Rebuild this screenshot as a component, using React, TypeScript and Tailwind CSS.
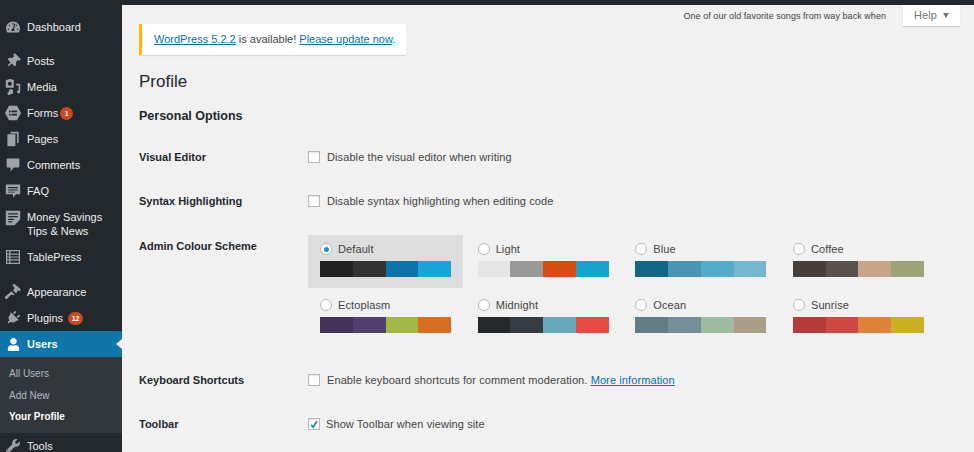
import React from "react";
import { FaThumbtack, FaWrench, FaUser, FaPlug, FaTachometerAlt } from "react-icons/fa";

const ic = "w-[16px] h-[16px]";
const HexIcon = () => (
  <svg viewBox="0 0 20 20" className={ic} fill="currentColor">
    <path fillRule="evenodd" d="M5 1h10l5 9-5 9H5L0 10zM5 7v2h2V7zm3 0v2h7V7zM5 11v2h2v-2zm3 0v2h7v-2z" />
  </svg>
);
const MediaIcon = () => (
  <svg viewBox="0 0 20 20" className={ic} fill="currentColor">
    <path fillRule="evenodd" d="M1 1h3l1-1h3l1 1h2v10H1zm5 2.500a2.500 2.500 0 100 5 2.500 2.500 0 000-5z" />
    <path d="M14 6h5v10a2 2 0 11-2-2V8h-3zM5 13h5v4a2 2 0 11-2-2h-1v3a2 2 0 11-2-2z" />
  </svg>
);
const PagesIcon = () => (
  <svg viewBox="0 0 20 20" className={ic} fill="currentColor">
    <path d="M7 1h10v14h-2V3H7z" />
    <path d="M3 4h10v15H3z" />
  </svg>
);
const CommentIcon = () => (
  <svg viewBox="0 0 20 20" className={ic} fill="currentColor">
    <path d="M3 2h14a1 1 0 011 1v9a1 1 0 01-1 1h-6l-4 5v-5H3a1 1 0 01-1-1V3a1 1 0 011-1z" />
  </svg>
);
const FaqIcon = () => (
  <svg viewBox="0 0 20 20" className={ic} fill="currentColor">
    <path fillRule="evenodd" d="M1 2h18v12h-5l-4 4v-4H1zm3 3v1.500h12V5zm0 3v1.500h12V8zm0 3v1h8v-1z" />
  </svg>
);
const NoteIcon = () => (
  <svg viewBox="0 0 20 20" className={ic} fill="currentColor">
    <path fillRule="evenodd" d="M1 1h18v11l-7 7H1zm3 3v1.500h12V4zm0 3.500V9h12V7.500zM4 11v1.500h7V11zm0 3v1.500h5V14z" />
  </svg>
);
const TableIcon = () => (
  <svg viewBox="0 0 20 20" className={ic} fill="none" stroke="currentColor" strokeWidth="1.500">
    <path d="M2 2h16v16H2zM2 6.500h16M2 10h16M2 13.500h16M6 2v16" />
  </svg>
);
const BrushIcon = () => (
  <svg viewBox="0 0 20 20" className={ic} fill="currentColor">
    <path d="M9 1l3-1 8 7-2 2-2-1-2 4-4-4 2-3zM8 9l4 4-1 1-3-1-6 6-2-1v-2l6-5z" />
  </svg>
);

const fa = "w-[14px] h-[14px]";
function Item({ icon, label, badge, cls = "h-[26px]", twoLine }: { icon: React.ReactNode; label: React.ReactNode; badge?: string; cls?: string; twoLine?: boolean }) {
  return (
    <div className={`flex ${twoLine ? "items-start pt-[6px]" : "items-center"} pl-[2px] text-[#eeeeee] ${cls}`}>
      <span className="w-[22px] flex justify-center text-[#9ea3a8] shrink-0 mr-[3px]">{icon}</span>
      <span className="leading-[14px] tracking-normal">{label}</span>
      {badge && (
        <span className={`${badge.length > 1 ? "ml-[5px] w-[15px]" : "ml-[2px] w-[13px]"} h-[13px] rounded-full bg-[#ca4a1f] text-white text-[7px] leading-[13px] text-center font-bold tracking-normal`}>{badge}</span>
      )}
    </div>
  );
}

function Row({ label, children, cls }: { label: string; children: React.ReactNode; cls: string }) {
  return (
    <div className={`flex items-center ${cls}`}>
      <div className="w-[169px] font-bold tracking-normal text-[#23282d] shrink-0 pt-[1px]">{label}</div>
      {children}
    </div>
  );
}

const Box = ({ checked }: { checked?: boolean }) => (
  <span className="w-[12px] h-[12px] bg-white border border-[#b4b9be] shadow-[inset_0_1px_2px_rgba(0,0,0,0.1)] flex items-center justify-center shrink-0">
    {checked && (
      <svg viewBox="0 0 12 12" className="w-[11px] h-[11px]" fill="none" stroke="#1e8cbe" strokeWidth="2.200"><path d="M2.500 6.500l2.500 2.500 4.500-7" /></svg>
    )}
  </span>
);

const schemes: { name: string; colors: string[]; active?: boolean }[] = [
  { name: "Default", colors: ["#222222", "#333333", "#0e73aa", "#19a3d6"], active: true },
  { name: "Light", colors: ["#e5e5e5", "#999999", "#d64e16", "#19a3cc"] },
  { name: "Blue", colors: ["#106788", "#4796b3", "#52accc", "#74b6ce"] },
  { name: "Coffee", colors: ["#46403c", "#59524c", "#c7a589", "#9ea476"] },
  { name: "Ectoplasm", colors: ["#413256", "#523f6d", "#a3b745", "#d46f25"] },
  { name: "Midnight", colors: ["#25282b", "#363b3f", "#69a8bb", "#e14d43"] },
  { name: "Ocean", colors: ["#627c83", "#738e96", "#9ebaa0", "#aa9d88"] },
  { name: "Sunrise", colors: ["#b43c38", "#cf4944", "#dd823b", "#ccaf25"] },
];

export default function App() {
  return (
    <div className="w-[974px] h-[452px] overflow-hidden flex flex-col bg-[#f1f1f1] text-[11px] tracking-[0.1px] text-[#444]" style={{ fontFamily: '"Liberation Sans", Arial, sans-serif' }}>
      <div className="h-[5px] bg-[#23282d] shrink-0" />
      <div className="flex flex-1 min-h-0">
        <aside className="w-[122px] shrink-0 bg-[#23282d] pt-[9px] overflow-hidden">
          <Item icon={<FaTachometerAlt className={fa} />} label="Dashboard" cls="h-[26px] mb-[8px]" />
          <Item icon={<FaThumbtack className={`${fa} rotate-45`} />} label="Posts" />
          <Item icon={<MediaIcon />} label="Media" />
          <Item icon={<HexIcon />} label="Forms" badge="1" />
          <Item icon={<PagesIcon />} label="Pages" />
          <Item icon={<CommentIcon />} label="Comments" />
          <Item icon={<FaqIcon />} label="FAQ" />
          <Item icon={<NoteIcon />} label={<>Money Savings<br />Tips &amp; News</>} cls="h-[40px]" twoLine />
          <Item icon={<TableIcon />} label="TablePress" cls="h-[26px] mb-[9px]" />
          <Item icon={<BrushIcon />} label="Appearance" />
          <Item icon={<FaPlug className={`${fa} rotate-45`} />} label="Plugins" badge="12" />
          <div className="relative flex items-center h-[26px] pl-[2px] bg-[#0e76a8] text-white font-bold tracking-normal">
            <span className="w-[22px] flex justify-center mr-[3px]"><FaUser className="w-[13px] h-[13px]" /></span>
            <span className="pt-[1px]">Users</span>
            <span className="absolute right-0 top-[8px] border-y-[5px] border-y-transparent border-r-[6px] border-r-[#f1f1f1]" />
          </div>
          <div className="h-[76px] bg-[#32373c] pl-[9px] pt-[6px] text-[10px] tracking-normal text-[#b4b9be]">
            <div className="h-[22px] leading-[22px]">All Users</div>
            <div className="h-[21px] leading-[21px]">Add New</div>
            <div className="h-[21px] leading-[21px] text-white font-bold">Your Profile</div>
          </div>
          <Item icon={<FaWrench className={fa} />} label="Tools" />
        </aside>
        <main className="flex-1 min-w-0 pl-[17px] pr-[14px]">
          <div className="flex justify-between items-start">
            <div className="mt-[19px] h-[31px] w-[267px] bg-white border-l-[3px] border-l-[#ffb900] shadow-[0_1px_1px_rgba(0,0,0,0.1)] pl-[12px] flex items-center whitespace-nowrap tracking-normal">
              <span><a className="text-[#0073aa] underline">WordPress 5.2.2</a> is available! <a className="text-[#0073aa] underline">Please update now</a>.</span>
            </div>
            <div className="flex items-start">
              <span className="text-[9px] tracking-[0.05px] mt-[5px] mr-[17px] text-[#444]">One of our old favorite songs from way back when</span>
              <div className="w-[57px] h-[21px] bg-white shadow-[0_1px_1px_rgba(0,0,0,0.15)] text-[#72777c] flex items-center justify-center gap-[6px]">
                Help
                <span className="border-x-[3.500px] border-x-transparent border-t-[5px] border-t-[#72777c]" />
              </div>
            </div>
          </div>
          <h1 className="mt-[15px] text-[17px] leading-[24px] tracking-normal text-[#23282d]">Profile</h1>
          <h2 className="mt-[12px] text-[12.500px] leading-[20px] tracking-normal font-bold text-[#23282d]">Personal Options</h2>
          <Row label="Visual Editor" cls="mt-[21px] h-[20px]">
            <Box /><span className="ml-[7px]">Disable the visual editor when writing</span>
          </Row>
          <Row label="Syntax Highlighting" cls="mt-[24px] h-[20px]">
            <Box /><span className="ml-[7px]">Disable syntax highlighting when editing code</span>
          </Row>
          <div className="flex mt-[24px] h-[112px]">
            <div className="w-[169px] font-bold tracking-normal text-[#23282d] pt-[2px] leading-[18px] shrink-0">Admin Colour Scheme</div>
            <div className="grid grid-cols-[repeat(4,157.670px)] auto-rows-[56px]">
              {schemes.map((s) => (
                <div key={s.name} className={`w-[155px] h-[53px] px-[12px] pt-[7px] ${s.active ? "bg-[#dddddd]" : ""}`}>
                  <div className="flex items-center h-[14px]">
                    <span className="w-[12px] h-[12px] rounded-full bg-white border border-[#b4b9be] flex items-center justify-center shrink-0">
                      {s.active && <span className="w-[5px] h-[5px] rounded-full bg-[#1e8cbe]" />}
                    </span>
                    <span className="ml-[6px]">{s.name}</span>
                  </div>
                  <div className="flex mt-[5px] h-[16px] w-[131px]">
                    {s.colors.map((c) => <span key={c} className="flex-1" style={{ background: c }} />)}
                  </div>
                </div>
              ))}
            </div>
          </div>
          <Row label="Keyboard Shortcuts" cls="mt-[23px] h-[20px]">
            <Box /><span className="ml-[7px]">Enable keyboard shortcuts for comment moderation. <a className="text-[#0073aa] underline">More information</a></span>
          </Row>
          <Row label="Toolbar" cls="mt-[24px] h-[20px]">
            <Box checked /><span className="ml-[6px]">Show Toolbar when viewing site</span>
          </Row>
        </main>
      </div>
    </div>
  );
}
